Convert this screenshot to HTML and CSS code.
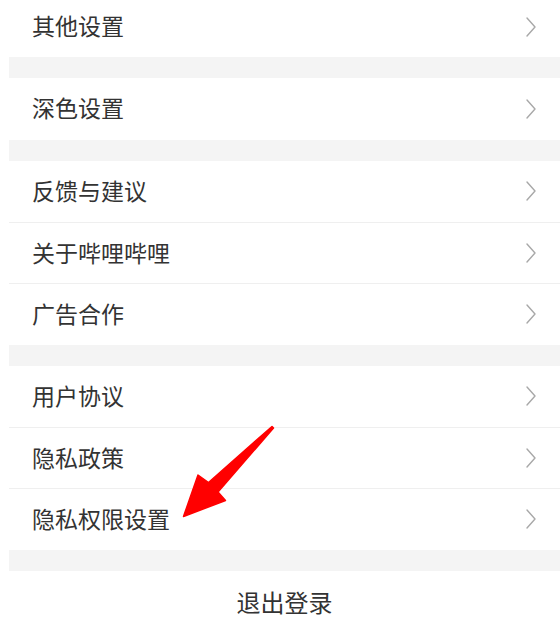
FILE: index.html
```html
<!DOCTYPE html>
<html lang="zh-CN">
<head>
<meta charset="utf-8">
<title>设置</title>
<link rel="stylesheet" href="styles.css">
</head>
<body>
<div class="page">
  <div class="settings">
    <div class="group group-first">
      <div class="row"><span class="label">其他设置</span><svg class="chev" viewBox="0 0 10 20" width="10" height="20"><polyline points="1,1 9,10 1,19"/></svg></div>
    </div>
    <div class="group">
      <div class="row"><span class="label">深色设置</span><svg class="chev" viewBox="0 0 10 20" width="10" height="20"><polyline points="1,1 9,10 1,19"/></svg></div>
    </div>
    <div class="group">
      <div class="row"><span class="label">反馈与建议</span><svg class="chev" viewBox="0 0 10 20" width="10" height="20"><polyline points="1,1 9,10 1,19"/></svg></div>
      <div class="row"><span class="label">关于哔哩哔哩</span><svg class="chev" viewBox="0 0 10 20" width="10" height="20"><polyline points="1,1 9,10 1,19"/></svg></div>
      <div class="row"><span class="label">广告合作</span><svg class="chev" viewBox="0 0 10 20" width="10" height="20"><polyline points="1,1 9,10 1,19"/></svg></div>
    </div>
    <div class="group">
      <div class="row"><span class="label">用户协议</span><svg class="chev" viewBox="0 0 10 20" width="10" height="20"><polyline points="1,1 9,10 1,19"/></svg></div>
      <div class="row"><span class="label">隐私政策</span><svg class="chev" viewBox="0 0 10 20" width="10" height="20"><polyline points="1,1 9,10 1,19"/></svg></div>
      <div class="row"><span class="label">隐私权限设置</span><svg class="chev" viewBox="0 0 10 20" width="10" height="20"><polyline points="1,1 9,10 1,19"/></svg></div>
    </div>
    <div class="group">
      <div class="logout">退出登录</div>
    </div>
  </div>
  <svg class="annotation" viewBox="0 0 560 624" width="560" height="624">
    <polygon points="272,426.5 208.5,482.5 198,475 183.5,516.5 225.5,500.5 218,492 273.5,428"/>
  </svg>
</div>
</body>
</html>
```
FILE: styles.css
```css
html, body {
  margin: 0;
  padding: 0;
  background: #ffffff;
}
body {
  font-family: "Noto Sans CJK SC", "Noto Sans", sans-serif;
  color: #333333;
  overflow: hidden;
  height: 624px;
}
.page {
  position: relative;
  width: 560px;
  height: 624px;
  overflow: hidden;
}
.settings {
  margin-left: 9px;
  width: 551px;
  background: #f4f4f4;
  display: flex;
  flex-direction: column;
  gap: 21px;
}
.group {
  background: #ffffff;
  display: flex;
  flex-direction: column;
}
.group-first {
  margin-top: -4px;
}
.row {
  box-sizing: border-box;
  height: 61.34px;
  display: flex;
  align-items: center;
  justify-content: space-between;
  padding: 0 24px 0 23px;
}
.row + .row {
  border-top: 1px solid #efefef;
}
.label {
  font-size: 23px;
  line-height: 1;
  margin-top: -2px;
}
.chev {
  display: block;
  fill: none;
  stroke: #a8a8a8;
  stroke-width: 1.4;
  stroke-linecap: round;
  stroke-linejoin: round;
}
.logout {
  height: 60px;
  display: flex;
  justify-content: center;
  padding-top: 19px;
  box-sizing: border-box;
  font-size: 24px;
  line-height: 1;
}
.annotation {
  position: absolute;
  left: 0;
  top: 0;
  pointer-events: none;
}
.annotation polygon {
  fill: #ff0000;
  stroke: #ff0000;
  stroke-width: 1.5;
  stroke-linejoin: round;
}
```
